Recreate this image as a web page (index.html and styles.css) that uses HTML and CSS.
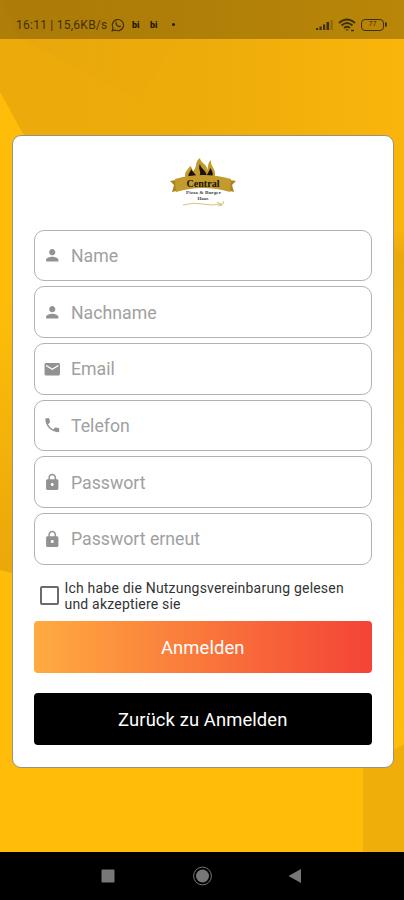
FILE: index.html
```html
<!DOCTYPE html>
<html lang="de">
<head>
  <meta charset="UTF-8">
  <meta name="viewport" content="width=device-width, initial-scale=1">
  <title>Registrieren</title>
  <link rel="stylesheet" href="styles.css">
</head>
<body>

  <!-- background facets -->
  <svg class="backdrop" viewBox="0 0 404 852" preserveAspectRatio="none">
    <defs>
      <linearGradient id="top" x1="0" y1="0" x2="1" y2="0">
        <stop offset="0" stop-color="#edab0b"/>
        <stop offset=".5" stop-color="#eeac0b"/>
        <stop offset="1" stop-color="#f9b50b"/>
      </linearGradient>
      <linearGradient id="left" x1="0" y1="0" x2="0" y2="1">
        <stop offset="0" stop-color="#ffbd0a"/>
        <stop offset="1" stop-color="#e9a70b"/>
      </linearGradient>
      <linearGradient id="right" x1="0" y1="0" x2="0" y2="1">
        <stop offset="0" stop-color="#f9b50b"/>
        <stop offset=".05" stop-color="#eba80b"/>
        <stop offset="1" stop-color="#ffbd0a"/>
      </linearGradient>
      <linearGradient id="shade" x1="0" y1="0" x2="1" y2="0">
        <stop offset="0" stop-color="#e8a70b"/>
        <stop offset="1" stop-color="#e8a70b" stop-opacity="0"/>
      </linearGradient>
    </defs>
    <rect width="404" height="852" fill="#ffbd0a"/>
    <path d="M0 0H404V250H140L22 132L0 92Z" fill="url(#top)"/>
    <path d="M0 0H200L140 100L100 80L20 39Z" fill="url(#shade)"/>
    <path d="M0 300H40V580L0 570Z" fill="url(#left)"/>
    <path d="M380 230H404V740H380Z" fill="url(#right)"/>
    <path d="M363 768L404 744V852H363Z" fill="#f0ae0b"/>
  </svg>

  <div class="screen">
    <div class="status-bar">
      <span class="clock">16:11 | 15,6KB/s</span>
      <svg class="whatsapp" viewBox="0 0 14 14" width="14" height="14">
        <path d="M1.200 12.800L2 9.800A5.600 5.600 0 1 1 4.200 12Z" fill="none" stroke="currentColor" stroke-width="1.200"/>
        <path d="M4.600 4.200c.5-.8 1.100-.4 1.300.5l-.3.8c.5 1.200 1.300 1.900 2.500 2.400l.8-.5c1 .3 1.400.8.7 1.500-2 1.600-6-2.200-5-4.700Z" fill="currentColor"/>
      </svg>
      <span class="notif">bi</span>
      <span class="notif">bi</span>
      <span class="dot"></span>
      <div class="status-icons">
        <svg viewBox="0 0 18 12" width="18" height="12" fill="currentColor">
          <rect x="0" y="9" width="2.200" height="2"/>
          <rect x="3.500" y="7.500" width="2.200" height="3.500"/>
          <rect x="7" y="5.500" width="2.200" height="5.500"/>
          <rect x="10.500" y="3" width="2.600" height="8"/>
          <rect x="14.500" y="1" width="2.200" height="10" opacity=".3"/>
        </svg>
        <svg class="wifi" viewBox="0 0 18 14" width="18" height="14" fill="none" stroke="currentColor" stroke-width="1.700">
          <path d="M1 5Q9-2 17 5M3.500 7.500Q9 2.500 14.500 7.500M6 10Q9 7.500 12 10"/>
          <path d="M7.300 11.200h3.400L9 13Z" fill="currentColor" stroke="none"/>
          <path d="M13 12.500h3" stroke-width="1.500"/>
        </svg>
        <span class="battery">77</span>
      </div>
    </div>

    <div class="main">
      <div class="card">
        <svg class="logo" viewBox="0 0 66 50" width="66" height="50">
          <path d="M16 22C13 15 18 13 20 9C22 10 22 12 23 14C28 10 24 5 30 1C30 6 38 7 37 13C39 10 37 6 41 3C40 10 48 13 44 22Z" fill="#c39a2c"/>
          <path d="M19 22C17 16 21 15 21 12C23 16 27 17 27 22ZM27 21C34 16 27 13 30 7C31 13 39 14 36 22ZM37 21C36 16 40 15 40 11C44 15 43 20 41 22Z" fill="#17120a"/>
          <path d="M6 23L0 24L4 28L2 35L11 33V24ZM60 23L66 24L62 28L64 35L55 33V24Z" fill="#ad8420"/>
          <path d="M5 22Q33 14 61 22L60 35Q33 27 6 35Z" fill="#c39a2c"/>
          <text x="33" y="29.500" class="logo-name" textLength="33" lengthAdjust="spacingAndGlyphs">Central</text>
          <text x="33.500" y="37" class="logo-sub" textLength="35" lengthAdjust="spacingAndGlyphs">Pizza &amp; Burger</text>
          <text x="33" y="42.500" class="logo-sub">Haus</text>
          <path d="M13 48Q24 45 33 47T50 47Q55 48 53 44M47 45L52 48L48 49" fill="none" stroke="#cdb35c" stroke-width=".8"/>
        </svg>

        <form class="form">
          <label class="field">
            <svg class="icon" viewBox="0 0 24 24"><path d="M12 12c2.210 0 4-1.790 4-4s-1.790-4-4-4-4 1.790-4 4 1.790 4 4 4zm0 2c-2.670 0-8 1.340-8 4v2h16v-2c0-2.660-5.330-4-8-4z"/></svg>
            <input type="text" placeholder="Name">
          </label>
          <label class="field">
            <svg class="icon" viewBox="0 0 24 24"><path d="M12 12c2.210 0 4-1.790 4-4s-1.790-4-4-4-4 1.790-4 4 1.790 4 4 4zm0 2c-2.670 0-8 1.340-8 4v2h16v-2c0-2.660-5.330-4-8-4z"/></svg>
            <input type="text" placeholder="Nachname">
          </label>
          <label class="field">
            <svg class="icon" viewBox="0 0 24 24"><path d="M20 4H4c-1.100 0-1.990.9-1.990 2L2 18c0 1.100.9 2 2 2h16c1.100 0 2-.9 2-2V6c0-1.100-.9-2-2-2zm0 4l-8 5-8-5V6l8 5 8-5v2z"/></svg>
            <input type="email" placeholder="Email">
          </label>
          <label class="field">
            <svg class="icon" viewBox="0 0 24 24"><path d="M6.620 10.790c1.440 2.830 3.760 5.140 6.590 6.590l2.200-2.200c.27-.27.67-.36 1.020-.24 1.120.37 2.330.57 3.570.57.55 0 1 .45 1 1V20c0 .55-.45 1-1 1-9.390 0-17-7.610-17-17 0-.55.45-1 1-1h3.500c.55 0 1 .45 1 1 0 1.250.2 2.450.57 3.570.11.35.03.74-.25 1.020l-2.200 2.200z"/></svg>
            <input type="tel" placeholder="Telefon">
          </label>
          <label class="field">
            <svg class="icon" viewBox="0 0 24 24"><path d="M18 8h-1V6c0-2.760-2.240-5-5-5S7 3.240 7 6v2H6c-1.100 0-2 .9-2 2v10c0 1.100.9 2 2 2h12c1.100 0 2-.9 2-2V10c0-1.100-.9-2-2-2zm-6 9c-1.100 0-2-.9-2-2s.9-2 2-2 2 .9 2 2-.9 2-2 2zm3.100-9H8.900V6c0-1.710 1.390-3.100 3.100-3.100s3.100 1.390 3.100 3.100v2z"/></svg>
            <input type="password" placeholder="Passwort">
          </label>
          <label class="field">
            <svg class="icon" viewBox="0 0 24 24"><path d="M18 8h-1V6c0-2.760-2.240-5-5-5S7 3.240 7 6v2H6c-1.100 0-2 .9-2 2v10c0 1.100.9 2 2 2h12c1.100 0 2-.9 2-2V10c0-1.100-.9-2-2-2zm-6 9c-1.100 0-2-.9-2-2s.9-2 2-2 2 .9 2 2-.9 2-2 2zm3.100-9H8.900V6c0-1.710 1.390-3.100 3.100-3.100s3.100 1.390 3.100 3.100v2z"/></svg>
            <input type="password" placeholder="Passwort erneut">
          </label>

          <label class="terms">
            <input type="checkbox" class="checkbox">
            <span>Ich habe die Nutzungsvereinbarung gelesen<br>und akzeptiere sie</span>
          </label>

          <button type="submit" class="button button-primary">Anmelden</button>
          <button type="button" class="button button-dark">Zurück zu Anmelden</button>
        </form>
      </div>
    </div>

    <div class="nav-bar">
      <svg viewBox="0 0 20 20" width="20" height="20"><rect x="3.500" y="3.500" width="13" height="13" rx="1"/></svg>
      <svg viewBox="0 0 20 20" width="20" height="20"><circle cx="10.500" cy="10" r="6.500"/><circle cx="10.500" cy="10" r="8.900" class="ring"/></svg>
      <svg viewBox="0 0 20 20" width="20" height="20"><path d="M2.500 10L15 3V17Z"/></svg>
    </div>
  </div>

</body>
</html>
```
FILE: styles.css
```css
html, body {
  margin: 0;
  padding: 0;
  height: 100%;
  overflow: hidden;
  font-family: Roboto, "Liberation Sans", sans-serif;
  background-color: #ffbd0a;
}

/* sits behind the whole screen */
.backdrop {
  position: absolute;
  top: 0;
  left: 0;
  width: 100%;
  height: 852px;
}

.screen {
  position: relative;
  height: 900px;
  display: flex;
  flex-direction: column;
}

.status-bar {
  box-sizing: border-box;
  height: 39px;
  padding: 10px 17px 0 16px;
  display: flex;
  align-items: center;
  background-color: rgba(0, 0, 0, 0.26);
  color: #3f300a;
}

.clock {
  width: 92px;
  font-size: 12px;
  letter-spacing: 0.25px;
  white-space: nowrap;
}

.whatsapp {
  margin-left: 3px;
}

.notif {
  margin-left: 7px;
  width: 11px;
  font-size: 9px;
  font-weight: 900;
  color: #241a05;
}

.dot {
  margin-left: 11px;
  width: 3px;
  height: 3px;
  border-radius: 50%;
  background-color: #241a05;
}

.status-icons {
  margin-left: auto;
  display: flex;
  align-items: center;
}

.wifi {
  margin-left: 4px;
}

.battery {
  position: relative;
  margin: 0 3px 0 5px;
  box-sizing: border-box;
  width: 23px;
  height: 12px;
  border: 1.5px solid #3f300a;
  border-radius: 4px;
  font-size: 7px;
  line-height: 9px;
  text-align: center;
}

.battery::after {
  content: "";
  position: absolute;
  right: -4px;
  top: 2px;
  width: 2px;
  height: 5px;
  border-radius: 0 2px 2px 0;
  background-color: #3f300a;
}

.main {
  flex: 1;
  padding: 96px 10px 0 11.5px;
}

.card {
  box-sizing: border-box;
  height: 633px;
  padding: 21px 21px 0;
  border: 1.5px solid #949382;
  border-radius: 9px;
  background-color: #fff;
}

.logo {
  display: block;
  margin: 0 auto 22.7px;
}

.logo-name {
  font-family: "Liberation Serif", serif;
  font-size: 10px;
  font-weight: bold;
  text-anchor: middle;
  fill: #17120a;
}

.logo-sub {
  font-family: "Liberation Serif", serif;
  font-size: 5px;
  font-weight: bold;
  text-anchor: middle;
  fill: #444;
}

.form {
  display: flex;
  flex-direction: column;
}

.field {
  box-sizing: border-box;
  height: 51.7px;
  margin-bottom: 5px;
  padding: 0 10px 0 8px;
  display: flex;
  align-items: center;
  border: 1px solid #b2b2b2;
  border-radius: 10px;
}

.icon {
  flex: none;
  width: 18.5px;
  height: 18.5px;
  fill: #929292;
}

.field input {
  flex: 1;
  min-width: 0;
  margin-left: 10px;
  padding: 1px 0 0;
  border: none;
  outline: none;
  background: none;
  font-family: inherit;
  font-size: 17.7px;
}

.field input::placeholder {
  color: #a0a0a0;
  opacity: 1;
}

.terms {
  height: 36px;
  margin: 8px 0 7.3px;
  padding-left: 6px;
  display: flex;
  align-items: center;
  font-size: 14px;
  line-height: 16px;
  letter-spacing: 0.2px;
  color: #333;
}

.checkbox {
  appearance: none;
  box-sizing: border-box;
  flex: none;
  width: 19px;
  height: 19px;
  margin: 0 6px 0 0;
  border: 2px solid #6b6b6b;
  border-radius: 2px;
}

.button {
  height: 51.5px;
  padding-top: 3px;
  border: none;
  border-radius: 4px;
  font-family: inherit;
  font-size: 18.4px;
  font-weight: 400;
  letter-spacing: 0.1px;
  color: #fff;
}

.button-primary {
  margin-bottom: 20.5px;
  background: linear-gradient(to right, #ffab40, #f44336);
}

.button-dark {
  background-color: #000;
}

.nav-bar {
  height: 48px;
  display: flex;
  justify-content: center;
  align-items: center;
  gap: 74px;
  background-color: #000;
  fill: #777;
}

.ring {
  fill: none;
  stroke: #777;
}
```
